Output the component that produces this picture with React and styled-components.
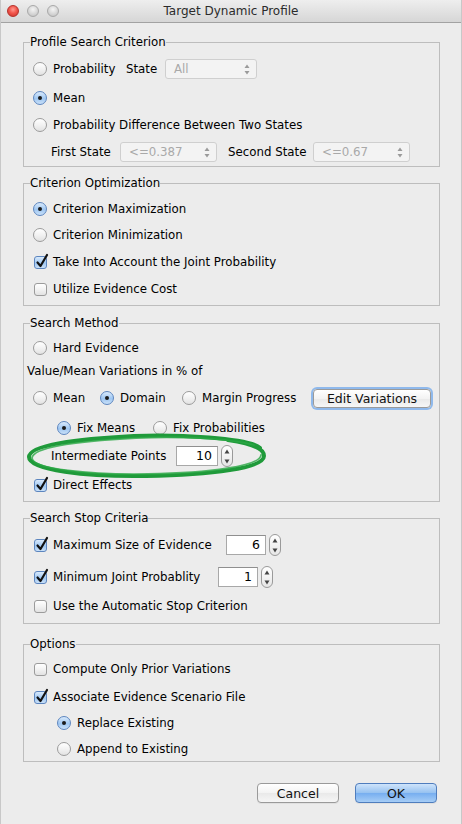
import styled, { createGlobalStyle } from 'styled-components'

const GlobalStyle = createGlobalStyle`
  html, body {
    margin: 0;
    padding: 0;
    background: #ececec;
  }
  body {
    font-family: "DejaVu Sans", "Liberation Sans", sans-serif;
    font-size: 11.8px;
    color: #000;
  }
`

const Window = styled.div`
  width: 462px;
  height: 824px;
  background: #ececec;
  box-sizing: border-box;
  border-left: 1px solid #c8c8c8;
  border-right: 1px solid #c8c8c8;
  overflow: hidden;
`

const TitleBar = styled.div`
  height: 22px;
  display: flex;
  align-items: center;
  justify-content: center;
  position: relative;
  background: linear-gradient(#eeeeee, #d6d6d6);
  border-bottom: 1px solid #a2a2a2;
`

const Lights = styled.div`
  position: absolute;
  left: 6px;
  top: 5px;
  display: flex;
  gap: 8px;
`

const Light = styled.span`
  width: 12px;
  height: 12px;
  border-radius: 50%;
  box-sizing: border-box;
  border: 1px solid ${(p) => (p.$red ? '#b5312a' : '#a9a9a9')};
  background: ${(p) =>
    p.$red
      ? 'radial-gradient(circle at 50% 35%, #ff9a90 0%, #f2574d 45%, #c9302a 100%)'
      : 'radial-gradient(circle at 50% 35%, #f4f4f4 0%, #d9d9d9 50%, #bcbcbc 100%)'};
`

const Title = styled.div`
  font-size: 12px;
  color: #2b2b2b;
`

const Content = styled.div`
  padding: 12px 21px 0 22px;
  display: flex;
  flex-direction: column;
`

const Group = styled.fieldset`
  margin: ${(p) => p.$mt || 0}px 0 0 0;
  padding: 0 0 ${(p) => p.$pb || 0}px 0;
  border: 1px solid #bdbdbd;
  border-radius: 0;
  min-width: 0;
`

const Legend = styled.legend`
  margin-left: 6px;
  padding: 0;
  line-height: 14px;
`

const Row = styled.div`
  position: relative;
  display: flex;
  align-items: center;
  height: 22px;
  margin-top: ${(p) => p.$mt || 0}px;
  padding-left: ${(p) => p.$indent ?? 9}px;
  white-space: nowrap;
`

const Option = styled.label`
  display: flex;
  align-items: center;
  gap: 6px;
  width: ${(p) => (p.$w ? `${p.$w}px` : 'auto')};
  flex: none;
`

const Circle = styled.span`
  width: 14px;
  height: 14px;
  box-sizing: border-box;
  border-radius: 50%;
  flex: none;
  display: flex;
  align-items: center;
  justify-content: center;
  border: 1px solid ${(p) => (p.$on ? '#5d86bf' : '#9b9b9b')};
  background: ${(p) =>
    p.$on
      ? 'linear-gradient(#d9eafc, #9fc7f2 55%, #c9e0f8)'
      : 'linear-gradient(#ffffff, #f2f2f2 50%, #e2e2e2)'};
  &::after {
    content: '';
    display: ${(p) => (p.$on ? 'block' : 'none')};
    width: 4px;
    height: 4px;
    border-radius: 50%;
    background: #1b1b1b;
  }
`

const Box = styled.span`
  position: relative;
  width: 13px;
  height: 13px;
  margin-left: 1px;
  box-sizing: border-box;
  border-radius: 3px;
  flex: none;
  border: 1px solid ${(p) => (p.$on ? '#5d86bf' : '#9b9b9b')};
  background: ${(p) =>
    p.$on
      ? 'linear-gradient(#d9eafc, #9fc7f2 55%, #c9e0f8)'
      : 'linear-gradient(#ffffff, #f2f2f2 50%, #e2e2e2)'};
  svg {
    position: absolute;
    left: 0px;
    top: -4px;
  }
`

const Text = styled.span`
  width: ${(p) => (p.$w ? `${p.$w}px` : 'auto')};
  margin-left: ${(p) => p.$ml || 0}px;
  flex: none;
`

const Combo = styled.div`
  width: ${(p) => p.$w}px;
  height: 20px;
  margin-left: ${(p) => p.$ml || 0}px;
  box-sizing: border-box;
  border: 1px solid #cfcfcf;
  border-radius: 3px;
  background: #f3f3f3;
  color: #a9a9a9;
  display: flex;
  align-items: center;
  justify-content: space-between;
  padding: 0 6px 0 8px;
  flex: none;
`

const NumField = styled.div`
  width: ${(p) => p.$w}px;
  height: 20px;
  margin-left: ${(p) => p.$ml || 0}px;
  box-sizing: border-box;
  border: 1px solid #a8a8a8;
  border-top-color: #8f8f8f;
  background: #fff;
  text-align: right;
  padding-right: 5px;
  line-height: 18px;
  font-size: 12.5px;
  flex: none;
`

const Stepper = styled.div`
  width: 12px;
  height: 22px;
  margin-left: ${(p) => p.$ml || 3}px;
  box-sizing: border-box;
  border: 1px solid #9a9a9a;
  border-radius: 6px;
  background: linear-gradient(#ffffff, #e6e6e6);
  display: flex;
  flex-direction: column;
  align-items: center;
  justify-content: space-around;
  flex: none;
`

const PushButton = styled.button`
  width: ${(p) => p.$w}px;
  height: ${(p) => p.$h || 20}px;
  margin-left: ${(p) => p.$ml || 0}px;
  box-sizing: border-box;
  font-family: inherit;
  font-size: 12.5px;
  color: #111;
  border-radius: 4px;
  padding: 0;
  flex: none;
  border: 1px solid ${(p) => (p.$primary ? '#4f7dbd' : '#9a9a9a')};
  background: ${(p) =>
    p.$primary
      ? 'linear-gradient(#cfe4fb, #95c1f0 50%, #76aef0 51%, #a6cdf6)'
      : 'linear-gradient(#ffffff, #f3f3f3 50%, #e9e9e9 51%, #f6f6f6)'};
  box-shadow: ${(p) => (p.$focus ? '0 0 0 2px #8fb9ec' : '0 1px 0 rgba(0,0,0,0.05)')};
`

const ButtonBar = styled.div`
  display: flex;
  justify-content: flex-end;
  gap: 16px;
  margin-top: 21px;
  padding-right: 3px;
`

const Ring = styled.svg`
  position: absolute;
  left: 0;
  top: -12px;
  width: 244px;
  height: 46px;
  pointer-events: none;
`

const Updown = ({ color = '#9a9a9a' }) => (
  <svg width="6" height="11" viewBox="0 0 6 11">
    <path d="M3 0.5 L5.5 4 L0.5 4 Z" fill={color} />
    <path d="M3 10.5 L5.5 7 L0.5 7 Z" fill={color} />
  </svg>
)

const StepArrows = () => (
  <Stepper>
    <svg width="6" height="5" viewBox="0 0 6 5">
      <path d="M3 0.5 L5.5 4.5 L0.5 4.5 Z" fill="#444" />
    </svg>
    <svg width="6" height="5" viewBox="0 0 6 5">
      <path d="M3 4.5 L5.5 0.5 L0.5 0.5 Z" fill="#444" />
    </svg>
  </Stepper>
)

const Radio = ({ on, w, children }) => (
  <Option $w={w}>
    <Circle $on={on} />
    <span>{children}</span>
  </Option>
)

const Check = ({ on, w, children }) => (
  <Option $w={w}>
    <Box $on={on}>
      {on && (
        <svg width="14" height="16" viewBox="0 0 14 16">
          <path d="M2.5 9.5 L5.5 13 L12 2" fill="none" stroke="#111" strokeWidth="2.2" strokeLinecap="round" strokeLinejoin="round" />
        </svg>
      )}
    </Box>
    <span>{children}</span>
  </Option>
)

export default function App() {
  return (
    <>
      <GlobalStyle />
      <Window>
        <TitleBar>
          <Lights>
            <Light $red />
            <Light />
            <Light />
          </Lights>
          <Title>Target Dynamic Profile</Title>
        </TitleBar>

        <Content>
          <Group $pb={3}>
            <Legend>Profile Search Criterion</Legend>
            <Row $mt={9}>
              <Radio w={93}>Probability</Radio>
              <Text $w={39}>State</Text>
              <Combo $w={92}>
                <span>All</span>
                <Updown />
              </Combo>
            </Row>
            <Row $mt={7}>
              <Radio on>Mean</Radio>
            </Row>
            <Row $mt={5}>
              <Radio>Probability Difference Between Two States</Radio>
            </Row>
            <Row $mt={5} $indent={27}>
              <Text $w={69}>First State</Text>
              <Combo $w={97}>
                <span>&lt;=0.387</span>
                <Updown />
              </Combo>
              <Text $w={85} $ml={11}>Second State</Text>
              <Combo $w={97}>
                <span>&lt;=0.67</span>
                <Updown />
              </Combo>
            </Row>
          </Group>

          <Group $mt={9} $pb={5}>
            <Legend>Criterion Optimization</Legend>
            <Row $mt={8}>
              <Radio on>Criterion Maximization</Radio>
            </Row>
            <Row $mt={4}>
              <Radio>Criterion Minimization</Radio>
            </Row>
            <Row $mt={5}>
              <Check on>Take Into Account the Joint Probability</Check>
            </Row>
            <Row $mt={5}>
              <Check>Utilize Evidence Cost</Check>
            </Row>
          </Group>

          <Group $mt={10} $pb={5}>
            <Legend>Search Method</Legend>
            <Row $mt={7}>
              <Radio>Hard Evidence</Radio>
            </Row>
            <Row $mt={1} $indent={3}>
              <Text>Value/Mean Variations in % of</Text>
            </Row>
            <Row $mt={5}>
              <Radio w={67}>Mean</Radio>
              <Radio on w={82}>Domain</Radio>
              <Radio w={131}>Margin Progress</Radio>
              <PushButton $w={118} $h={19} $focus>Edit Variations</PushButton>
            </Row>
            <Row $mt={8} $indent={33}>
              <Radio on w={96}>Fix Means</Radio>
              <Radio>Fix Probabilities</Radio>
            </Row>
            <Row $mt={6} $indent={27}>
              <Text $w={125}>Intermediate Points</Text>
              <NumField $w={42}>10</NumField>
              <StepArrows />
              <Ring viewBox="0 0 244 46">
                <path
                  d="M236 15 C 226 5, 152 1, 110 3 C 52 6, 5 12, 5 24 C 5 37, 62 44, 122 43 C 188 42, 240 35, 240 23 C 240 16, 230 11, 204 7"
                  fill="none"
                  stroke="#1f9a3a"
                  strokeWidth="4"
                  strokeLinecap="round"
                />
                <path
                  d="M230 12 C 204 5, 152 3, 112 5 C 56 8, 9 14, 8 25 C 9 36, 64 42, 124 41 C 186 40, 236 33, 237 22"
                  fill="none"
                  stroke="#2aa845"
                  strokeWidth="1.8"
                  strokeOpacity="0.8"
                  strokeLinecap="round"
                />
              </Ring>
            </Row>
            <Row $mt={7}>
              <Check on>Direct Effects</Check>
            </Row>
          </Group>

          <Group $mt={9} $pb={6}>
            <Legend>Search Stop Criteria</Legend>
            <Row $mt={9}>
              <Check on w={193}>Maximum Size of Evidence</Check>
              <NumField $w={40}>6</NumField>
              <StepArrows />
            </Row>
            <Row $mt={10}>
              <Check on w={185}>Minimum Joint Probablity</Check>
              <NumField $w={40}>1</NumField>
              <StepArrows />
            </Row>
            <Row $mt={7}>
              <Check>Use the Automatic Stop Criterion</Check>
            </Row>
          </Group>

          <Group $mt={13} $pb={1}>
            <Legend>Options</Legend>
            <Row $mt={7}>
              <Check>Compute Only Prior Variations</Check>
            </Row>
            <Row $mt={6}>
              <Check on>Associate Evidence Scenario File</Check>
            </Row>
            <Row $mt={4} $indent={33}>
              <Radio on>Replace Existing</Radio>
            </Row>
            <Row $mt={4} $indent={33}>
              <Radio>Append to Existing</Radio>
            </Row>
          </Group>

          <ButtonBar>
            <PushButton $w={82}>Cancel</PushButton>
            <PushButton $w={82} $primary>OK</PushButton>
          </ButtonBar>
        </Content>
      </Window>
    </>
  )
}
